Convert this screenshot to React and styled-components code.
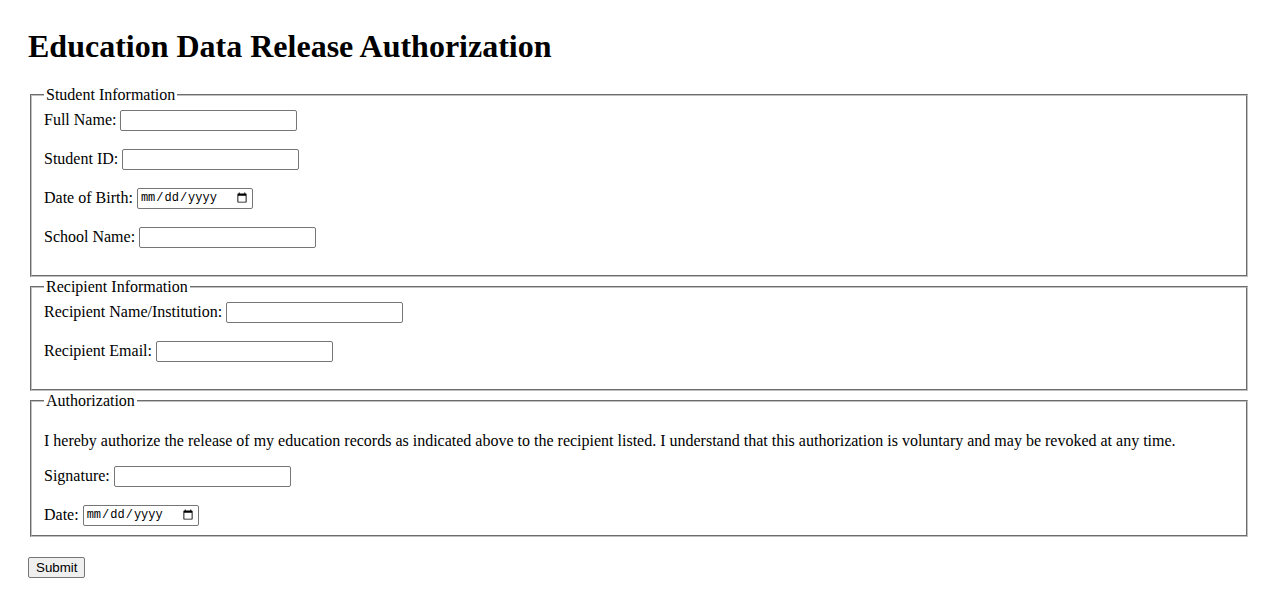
import styled, { createGlobalStyle } from "styled-components";

const GlobalStyle = createGlobalStyle`
    body {
        margin: 0;
        padding: 28px;
        font-family: "Liberation Serif", "Times New Roman", serif;
        font-size: 16px;
        color: #000;
        background: #fff;
    }
`;

const Title = styled.h1`
    font-size: 32px;
    font-weight: bold;
    margin: 0 0 20px;
    line-height: 37px;
`;

const Section = styled.fieldset`
    margin: 0 2px;
    padding: 4.6px 12px 9.5px;
    border: 2px groove #c0c0c0;
`;

const Legend = styled.legend`
    padding: 0 2px;
    line-height: 20px;
`;

const Row = styled.div`
    display: flex;
    align-items: center;
    gap: 4px;
    height: 21px;
    margin-bottom: ${(props) => (props.last ? "0" : "18px")};
`;

const TextInput = styled.input`
    box-sizing: border-box;
    width: 177px;
    height: 21px;
    padding: 1px 2px;
    border: 1px solid #767676;
    border-radius: 2px;
    font-family: "Liberation Sans", Arial, sans-serif;
    font-size: 13.33px;
    margin: 0;
`;

const DateInput = styled(TextInput)`
    width: 116px;
    font-family: "Liberation Mono", "DejaVu Sans Mono", monospace;
    font-size: 12px;
`;

const Notice = styled.p`
    margin: 16px 0;
    line-height: 18px;
`;

const SubmitButton = styled.button`
    display: block;
    margin-top: 20px;
    height: 21px;
    padding: 1px 7px;
    border: 1px solid #767676;
    border-radius: 2px;
    background: #efefef;
    font-family: "Liberation Sans", Arial, sans-serif;
    font-size: 13.33px;
    color: #000;
`;

function Field({ label, id, type = "text", last }) {
    const Input = type === "date" ? DateInput : TextInput;
    return (
        <Row last={last}>
            <label htmlFor={id}>{label}</label>
            <Input type={type} id={id} name={id} />
        </Row>
    );
}

export default function App() {
    return (
        <>
            <GlobalStyle />
            <Title>Education Data Release Authorization</Title>
            <form onSubmit={(e) => e.preventDefault()}>
                <Section>
                    <Legend>Student Information</Legend>
                    <Field label="Full Name:" id="fullName" />
                    <Field label="Student ID:" id="studentId" />
                    <Field label="Date of Birth:" id="dob" type="date" />
                    <Field label="School Name:" id="schoolName" />
                </Section>
                <Section>
                    <Legend>Recipient Information</Legend>
                    <Field label="Recipient Name/Institution:" id="recipientName" />
                    <Field label="Recipient Email:" id="recipientEmail" />
                </Section>
                <Section>
                    <Legend>Authorization</Legend>
                    <Notice>
                        I hereby authorize the release of my education records as indicated above to the recipient listed. I understand that this authorization is voluntary and may be revoked at any time.
                    </Notice>
                    <Field label="Signature:" id="signature" />
                    <Field label="Date:" id="date" type="date" last />
                </Section>
                <SubmitButton type="submit">Submit</SubmitButton>
            </form>
        </>
    );
}
